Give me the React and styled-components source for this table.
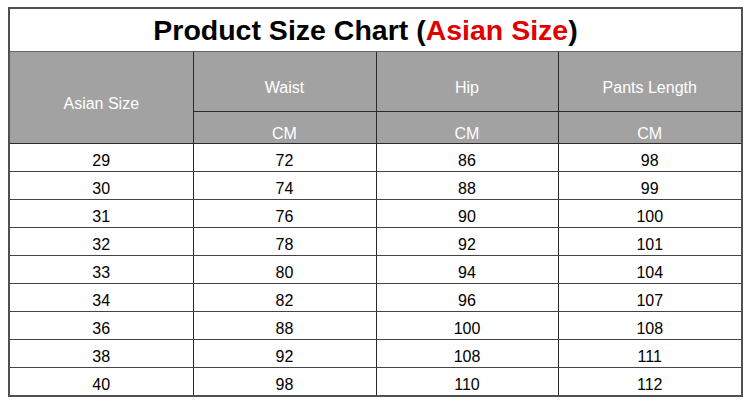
import React from 'react';
import styled, { createGlobalStyle } from 'styled-components';

const GlobalStyle = createGlobalStyle`
    body {
        margin: 0;
        background: #fff;
        font-family: "Liberation Sans", Arial, sans-serif;
    }
`

const Page = styled.div`
    padding: 7px 0 0 8px;
`

const Table = styled.table`
    width: 733px;
    table-layout: fixed;
    border-collapse: collapse;
    border: 2px solid #505050;
`

const TitleCell = styled.th`
    height: 41px;
    padding: 1px 20px 0 0;
    font-size: 28.5px;
    font-weight: bold;
    color: #000;
    text-align: center;
    border-bottom: 1px solid #666;
`

const Red = styled.span`
    color: #e00000;
`

const HeadCell = styled.th`
    height: ${p => p.$h}px;
    padding: ${p => p.$pad}px 0 0 0;
    background: #a2a2a2;
    color: #fff;
    font-size: 16px;
    font-weight: normal;
    text-align: center;
    vertical-align: middle;
    border: 1px solid #2a2a2a;
    border-top: none;
`

const Cell = styled.td`
    height: 20px;
    padding: 7px 0 0 0;
    font-size: 16px;
    color: #000;
    text-align: center;
    vertical-align: middle;
    border: 1px solid #2a2a2a;
    border-bottom-color: #444;
`

const rows = [
    ['29', '72', '86', '98'],
    ['30', '74', '88', '99'],
    ['31', '76', '90', '100'],
    ['32', '78', '92', '101'],
    ['33', '80', '94', '104'],
    ['34', '82', '96', '107'],
    ['36', '88', '100', '108'],
    ['38', '92', '108', '111'],
    ['40', '98', '110', '112'],
]

const App = () => {
    return (
        <Page>
            <GlobalStyle />
            <Table>
                <colgroup>
                    <col style={{ width: 184 }} />
                    <col style={{ width: 183 }} />
                    <col style={{ width: 182 }} />
                    <col style={{ width: 184 }} />
                </colgroup>
                <thead>
                    <tr>
                        <TitleCell colSpan={4}>
                            Product Size Chart (<Red>Asian Size</Red>)
                        </TitleCell>
                    </tr>
                    <tr>
                        <HeadCell rowSpan={2} $h={78} $pad={13}>Asian Size</HeadCell>
                        <HeadCell $h={46} $pad={13}>Waist</HeadCell>
                        <HeadCell $h={46} $pad={13}>Hip</HeadCell>
                        <HeadCell $h={46} $pad={13}>Pants Length</HeadCell>
                    </tr>
                    <tr>
                        <HeadCell $h={19} $pad={12}>CM</HeadCell>
                        <HeadCell $h={19} $pad={12}>CM</HeadCell>
                        <HeadCell $h={19} $pad={12}>CM</HeadCell>
                    </tr>
                </thead>
                <tbody>
                    {rows.map(r => (
                        <tr key={r[0]}>
                            {r.map((v, i) => <Cell key={i}>{v}</Cell>)}
                        </tr>
                    ))}
                </tbody>
            </Table>
        </Page>
    )
}

export default App
